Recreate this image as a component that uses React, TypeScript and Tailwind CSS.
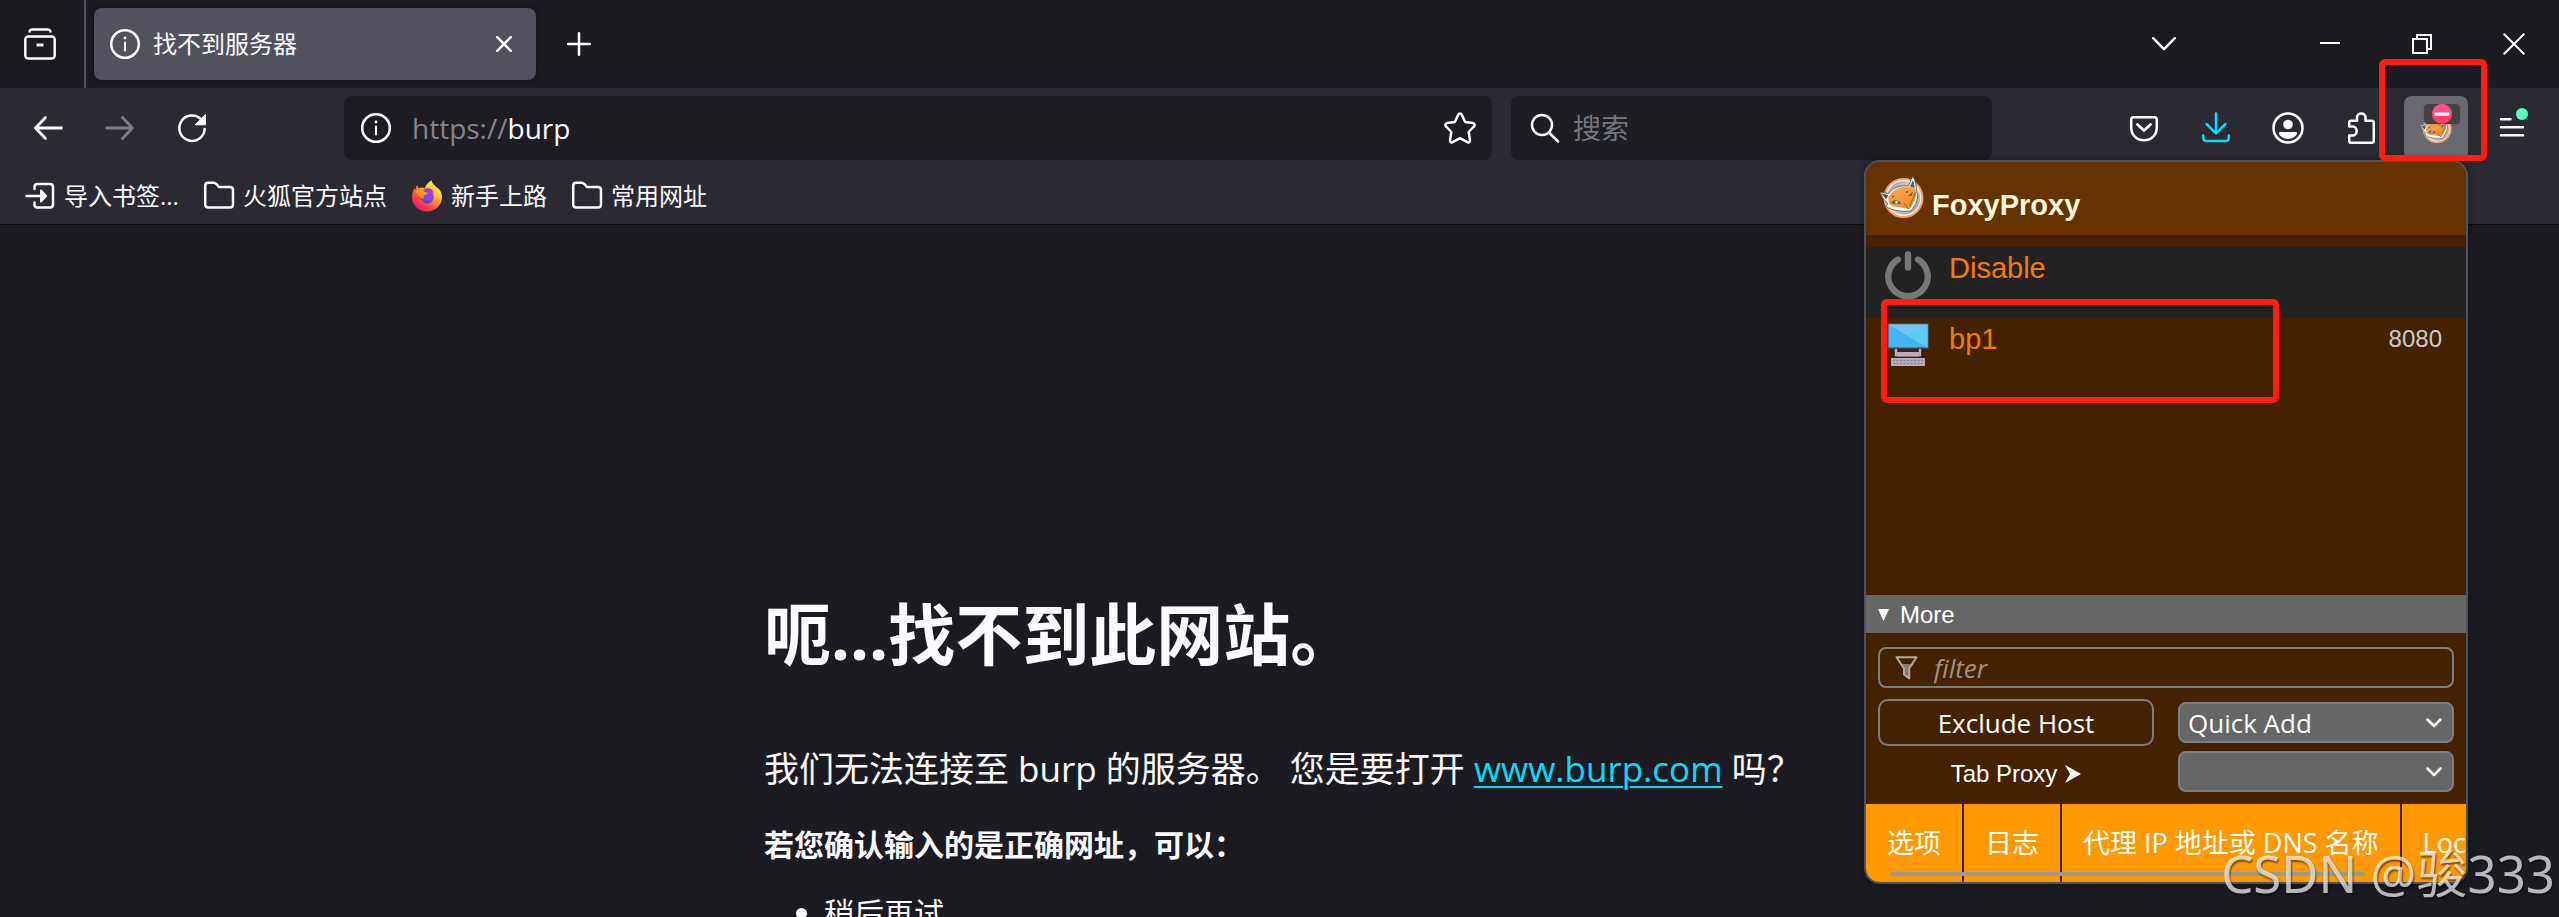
import React from "react";

type IconProps = { className?: string };

const stroke = {
  fill: "none",
  stroke: "currentColor",
  strokeWidth: 2.5,
  strokeLinecap: "round" as const,
  strokeLinejoin: "round" as const,
};

function RecentIcon() {
  return (
    <svg className="size-8" viewBox="0 0 32 32" {...stroke} aria-hidden="true">
      <path d="M5.500 3.500C6 2 6.800 1.500 8 1.500H24C25.200 1.500 26 2 26.500 3.500" />
      <rect x="1.300" y="8.500" width="29.400" height="22" rx="3" />
      <path d="M12.500 17H19.500" strokeWidth="3" strokeLinecap="butt" />
    </svg>
  );
}

function InfoIcon() {
  return (
    <svg className="size-8 shrink-0" viewBox="0 0 32 32" {...stroke} aria-hidden="true">
      <circle cx="16" cy="16" r="13.800" />
      <path d="M16 14.500V22.500" strokeWidth="2" />
      <circle cx="16" cy="10" r="1.400" fill="currentColor" stroke="none" />
    </svg>
  );
}

function ArrowIcon({ className = "" }: IconProps) {
  return (
    <svg className={`size-8 ${className}`} viewBox="0 0 32 32" {...stroke} strokeWidth="2.800" aria-hidden="true">
      <path d="M13.500 5.500L3.500 16L13.500 26.500M3.500 16H29.500" />
    </svg>
  );
}

function ReloadIcon() {
  return (
    <svg className="size-8" viewBox="0 0 32 32" {...stroke} aria-hidden="true">
      <path d="M28.700 17A12.700 12.700 0 1 1 25 7.200" />
      <path d="M29.500 2.800V12.800H19.500Z" fill="currentColor" strokeWidth="1" />
    </svg>
  );
}

function StarIcon() {
  return (
    <svg className="size-8 shrink-0" viewBox="0 0 32 32" {...stroke} aria-hidden="true">
      <path d="M14.300 2.600C14.900 1.200 17.100 1.200 17.700 2.600L21.200 10L28.700 11.100C30.600 11.400 31.200 13.200 29.900 14.500L24.700 20L26 28.200C26.200 30 24.800 30.900 23.300 30.200L16 26.200L8.700 30.200C7.200 30.900 5.800 30 6 28.200L7.300 20L2.100 14.500C.8 13.200 1.400 11.400 3.300 11.100L10.800 10Z" />
    </svg>
  );
}

function SearchIcon() {
  return (
    <svg className="size-8 shrink-0" viewBox="0 0 32 32" {...stroke} aria-hidden="true">
      <circle cx="13" cy="13" r="10" />
      <path d="M20 20.500L29 29.500" />
    </svg>
  );
}

function FolderIcon() {
  return (
    <svg className="size-8" viewBox="0 0 32 32" {...stroke} aria-hidden="true">
      <path d="M2.200 6C2.200 3.800 3.500 2.800 5 2.800H10.500C12 2.800 12.800 3.300 13.600 4.200L16 7H27C29 7 30 8.200 30 10V24.500C30 26.500 29 27.500 27 27.500H5.500C3.500 27.500 2.200 26.500 2.200 24.500Z" />
    </svg>
  );
}

function ImportIcon() {
  return (
    <svg className="size-8" viewBox="0 0 32 32" {...stroke} aria-hidden="true">
      <path d="M10.500 9V7C10.500 5 11.800 4 13.500 4H26C28 4 29 5 29 7V24.500C29 26.500 28 27.500 26 27.500H13.500C11.800 27.500 10.500 26.500 10.500 24.500V22.500" />
      <path d="M2.500 16H16" />
      <path d="M17 10.500L22 16L17 21.500Z" fill="currentColor" strokeWidth="2" />
    </svg>
  );
}

function FirefoxLogo() {
  return (
    <svg className="size-8" viewBox="0 0 32 32" aria-hidden="true">
      <defs>
        <linearGradient id="ffBody" x1="0.850" y1="0.100" x2="0.200" y2="0.950">
          <stop offset="0" stopColor="#fff44f" />
          <stop offset="0.300" stopColor="#ffc233" />
          <stop offset="0.550" stopColor="#ff7139" />
          <stop offset="0.800" stopColor="#ff3647" />
          <stop offset="1" stopColor="#e31587" />
        </linearGradient>
        <radialGradient id="ffCore" cx="0.600" cy="0.300" r="0.800">
          <stop offset="0" stopColor="#b833e1" />
          <stop offset="0.500" stopColor="#7a4be8" />
          <stop offset="1" stopColor="#4540c0" />
        </radialGradient>
      </defs>
      <path
        d="M20.500.3C20.800 3.200 23.200 4.800 25.500 7.300C29 9 31 13 31 17C31 25 24.500 31.500 16 31.500C7.500 31.500 1 25 1 17C1 13.500 2 10.500 3.600 8.200L4.300 10L6 5L7.800 8.200C9.500 7.200 12 7.400 13.600 8.200C15 5 17 2.500 20.500.3Z"
        fill="url(#ffBody)"
      />
      <circle cx="16.200" cy="16.800" r="6.600" fill="url(#ffCore)" />
      <path d="M12.500 9.200C16 7.200 22.500 8 22.800 14C21 11 17.500 10.500 15.500 12Z" fill="#a236d8" />
      <path d="M4.500 11C7 9 10.500 9.300 12.600 12C14 12.200 16 12 16.800 13C16.200 14.900 13 14.800 12.300 16.300C12.100 17.500 12.600 18.300 13.200 19C10 18.500 7 15.500 4.500 11Z" fill="#ff9a1e" />
    </svg>
  );
}

function PocketIcon() {
  return (
    <svg className="size-8" viewBox="0 0 32 32" {...stroke} aria-hidden="true">
      <path d="M5.500 5.300H26.500C28 5.300 28.800 6.200 28.800 7.700V15.500C28.800 23 23.500 28.200 16 28.200C8.500 28.200 3.200 23 3.200 15.500V7.700C3.200 6.200 4 5.300 5.500 5.300Z" />
      <path d="M9.500 12.500L16 18.500L22.500 12.500" strokeWidth="2.800" />
    </svg>
  );
}

function DownloadIcon() {
  return (
    <svg className="size-8" viewBox="0 0 32 32" {...stroke} aria-hidden="true">
      <path d="M16 1.500V21M6.500 12L16 21.300L25.500 12M3.200 23.500V26C3.200 28 4.500 29 6.500 29H25.500C27.500 29 28.800 28 28.800 26V23.500" />
    </svg>
  );
}

function AccountIcon() {
  return (
    <svg className="size-8" viewBox="0 0 32 32" aria-hidden="true">
      <circle cx="16" cy="16" r="14.500" fill="none" stroke="currentColor" strokeWidth="2.600" />
      <circle cx="16" cy="12.500" r="4.800" fill="currentColor" />
      <path d="M8.500 20H23.500C26 20 25 22.500 23.500 24C19.500 28 12.500 28 8.500 24C7 22.500 6 20 8.500 20Z" fill="currentColor" />
    </svg>
  );
}

function PuzzleIcon() {
  return (
    <svg className="size-8" viewBox="0 0 32 32" {...stroke} aria-hidden="true">
      <path d="M5.200 14.500V11C5.200 9.500 6 8.800 7.200 8.800H13V5.500C13 .2 21.500.2 21.500 5.500V8.800H27.500C29 8.800 29.800 9.500 29.800 11V28.500C29.800 30 29 30.800 27.500 30.800H7.200C6 30.800 5.200 30 5.200 28.500V23.500H8.500C14 23.500 14 14.500 8.500 14.500Z" />
    </svg>
  );
}

function FoxLogo({ className = "" }: IconProps) {
  return (
    <svg className={className} viewBox="0 0 44 42" aria-hidden="true">
      <defs>
        <linearGradient id="foxRing" x1="0" y1="0" x2="1" y2="1">
          <stop offset="0" stopColor="#8d9092" />
          <stop offset="0.500" stopColor="#d8d8d8" />
          <stop offset="1" stopColor="#85888a" />
        </linearGradient>
        <linearGradient id="foxFace" x1="0" y1="0" x2="1" y2="1">
          <stop offset="0" stopColor="#f9ab5e" />
          <stop offset="1" stopColor="#f58a1f" />
        </linearGradient>
      </defs>
      <circle cx="23.500" cy="22" r="19" fill="url(#foxRing)" stroke="#f3a15f" strokeWidth="2" />
      <circle cx="23.500" cy="22" r="17.300" fill="none" stroke="#f7f1ea" strokeWidth="1.200" />
      <path d="M.5 16.500L9 17.500C13 11.500 20 9 28.500 10L32.500.5C35.500 4 36.800 10 36.300 15.500C40 20 36 29 31 35C22 36 11 34.500 6.500 30.500L7.500 27C3.500 24 1.500 20 .5 16.500Z" fill="#fff" stroke="#666a6d" strokeWidth="1" strokeLinejoin="round" />
      <path d="M8 22C12 12 25 7.500 35 12.500C38 18 34.500 26 30 33C27 32 22 31.800 17 31C13 30.500 10 29.500 9 27.500Z" fill="url(#foxFace)" />
      <path d="M1.500 17.500L6 23.500L8.500 19ZM30 10.500L33 4L35 12Z" fill="#56595c" />
      <path d="M11 26.500C14 23 18 24 22 27.500C17 29 13 28.500 11 26.500ZM28 20L33 15.500L31.500 20Z" fill="#62625f" />
      <circle cx="16.500" cy="26.200" r="1.200" fill="#eee" />
      <path d="M35 17C34 23 31 25 30 30M24 27.500L28.500 33" fill="none" stroke="#8a5a25" strokeWidth="1" />
      <circle cx="13" cy="20.500" r="1" fill="#76552e" />
      <circle cx="27" cy="16" r="1" fill="#76552e" />
    </svg>
  );
}

function PowerIcon() {
  return (
    <svg className="h-12 w-[46px]" viewBox="0 0 46 48" fill="none" stroke="#777" strokeWidth="6.400" strokeLinecap="round" aria-hidden="true">
      <path d="M13 8.500A19.700 19.700 0 1 0 33 8.500" />
      <path d="M23 3.500V16.500" />
    </svg>
  );
}

function ComputerIcon() {
  return (
    <svg className="h-[43px] w-[42px]" viewBox="0 0 42 43" aria-hidden="true">
      <rect width="42" height="26" fill="#494056" />
      <rect x="1.500" y="1.500" width="39" height="23" fill="#44b5f2" />
      <path d="M1.500 1.500H40.500V24.500Z" fill="#74c4f6" />
      <path d="M20 12.500L40.500 1.500V24.500Z" fill="#5fcaf5" />
      <path d="M9 26V32H33V26" fill="none" stroke="#b5a9c0" strokeWidth="2.500" />
      <rect x="10" y="29" width="22" height="4.500" fill="#b9adc3" />
      <rect x="4" y="35" width="34" height="8" fill="#b3a9b8" />
      <path d="M6 37.500H36M6 40.500H36" stroke="#857b8d" strokeWidth="1" strokeDasharray="2 1.500" />
    </svg>
  );
}

function Chevron({ className = "" }: IconProps) {
  return (
    <svg className={className} viewBox="0 0 16 10" {...stroke} aria-hidden="true">
      <path d="M1.500 1.500L8 8L14.500 1.500" />
    </svg>
  );
}

const toolButton = "flex h-16 w-16 shrink-0 items-center justify-center rounded-lg";
const cjk = "font-['Open_Sans','Noto_Sans_CJK_SC',sans-serif]";

function TabStrip() {
  return (
    <header className="flex h-[88px] items-center">
      <button aria-label="最近浏览" className="ml-2 flex h-16 w-16 items-center justify-center">
        <RecentIcon />
      </button>
      <div className="ml-3 h-full w-[2px] bg-[#52525e]" />
      <div className="ml-2 flex h-[72px] w-[442px] items-center rounded-lg bg-[#52525e] pl-[15px] pr-4 shadow-[0_0_6px_rgba(0,0,0,0.5)]">
        <InfoIcon />
        <span className="ml-3 flex-1 text-[24px] leading-8">找不到服务器</span>
        <button aria-label="关闭标签页" className="flex h-8 w-8 items-center justify-center">
          <svg className="size-4" viewBox="0 0 16 16" {...stroke}>
            <path d="M1.200 1.200L14.800 14.800M14.800 1.200L1.200 14.800" />
          </svg>
        </button>
      </div>
      <button aria-label="新建标签页" className="ml-[11px] flex h-16 w-16 items-center justify-center">
        <svg className="size-6" viewBox="0 0 24 24" {...stroke}>
          <path d="M12 1.200V22.800M1.200 12H22.800" />
        </svg>
      </button>
      <div className="ml-auto flex items-center">
        <button aria-label="列出所有标签页" className="mr-[88px] flex h-16 w-16 items-center justify-center">
          <svg className="h-[14px] w-6" viewBox="0 0 24 14" {...stroke}>
            <path d="M1.200 1.200L12 12.200L22.800 1.200" />
          </svg>
        </button>
        <button aria-label="最小化" className="flex h-16 w-[92px] items-center justify-center">
          <svg className="size-5" viewBox="0 0 20 20">
            <path d="M0 9H20" stroke="currentColor" strokeWidth="2" />
          </svg>
        </button>
        <button aria-label="还原" className="flex h-16 w-[92px] items-center justify-center">
          <svg className="size-5" viewBox="0 0 20 20" fill="none" stroke="currentColor" strokeWidth="2">
            <path d="M1 5H15V19H1ZM5 5V1H19V15H15" />
          </svg>
        </button>
        <button aria-label="关闭" className="flex h-16 w-[91px] items-center justify-center">
          <svg className="size-[22px]" viewBox="0 0 22 22" fill="none" stroke="currentColor" strokeWidth="2">
            <path d="M.7.7L21.300 21.300M21.300.7L.7 21.300" />
          </svg>
        </button>
      </div>
    </header>
  );
}

function NavBar() {
  return (
    <div className="flex h-20 items-center pl-4 pr-[15px]">
      <div className="flex gap-2">
        <button aria-label="后退" className={toolButton}>
          <ArrowIcon />
        </button>
        <button aria-label="前进" disabled className={`${toolButton} text-[#7e7d84]`}>
          <ArrowIcon className="rotate-180" />
        </button>
        <button aria-label="重新载入" className={toolButton}>
          <ReloadIcon />
        </button>
      </div>
      <div className="ml-[120px] flex h-16 flex-1 items-center rounded-lg bg-[#1e1d24] px-4">
        <InfoIcon />
        <a href="https://burp" className="ml-5 flex-1 text-[28px] leading-9">
          <span className="text-[#85848a]">https://</span>burp
        </a>
        <button aria-label="为此页添加书签">
          <StarIcon />
        </button>
      </div>
      <label className="ml-[19px] flex h-16 w-[481px] items-center rounded-lg bg-[#1e1d24] pl-[18px]">
        <SearchIcon />
        <input
          aria-label="搜索"
          placeholder="搜索"
          className="ml-3 w-full bg-transparent text-[28px] leading-9 outline-none placeholder:text-[#76757b]"
        />
      </label>
      <div className="ml-[120px] flex gap-2">
        <button aria-label="保存到 Pocket" className={toolButton}>
          <PocketIcon />
        </button>
        <button aria-label="下载" className={`${toolButton} text-[#00ddff]`}>
          <DownloadIcon />
        </button>
        <button aria-label="账户" className={toolButton}>
          <AccountIcon />
        </button>
        <button aria-label="扩展" className={toolButton}>
          <PuzzleIcon />
        </button>
      </div>
      <div className="ml-3 flex gap-3">
        <button aria-label="FoxyProxy" className={`${toolButton} relative bg-[#6a6971]`}>
          <FoxLogo className="size-8" />
          <span className="absolute right-2 top-2 flex h-5 w-9 items-center justify-center rounded-sm bg-[#444] shadow">
            <svg className="size-5" viewBox="0 0 20 20" aria-hidden="true">
              <circle cx="10" cy="10" r="10" fill="#ff3b6f" />
              <path d="M0 10A10 10 0 0 1 20 10Z" fill="#ff4f86" />
              <rect x="2.500" y="8.500" width="15" height="3.200" rx="1" fill="#fff" />
            </svg>
          </span>
        </button>
        <button aria-label="打开应用程序菜单" className={toolButton}>
          <svg className="h-12 w-8" viewBox="0 0 32 48" aria-hidden="true">
            <path d="M5 15.200H14.500M5 23.200H27M5 31.200H27" {...stroke} />
            <circle cx="26" cy="10" r="6" fill="#54ffbd" />
          </svg>
        </button>
      </div>
    </div>
  );
}

const bookmarks = [
  { label: "导入书签...", icon: <ImportIcon /> },
  { label: "火狐官方站点", icon: <FolderIcon /> },
  { label: "新手上路", icon: <FirefoxLogo /> },
  { label: "常用网址", icon: <FolderIcon /> },
];

function BookmarksBar() {
  return (
    <nav className="flex h-14 items-center gap-6 pl-6">
      {bookmarks.map((b) => (
        <a key={b.label} href="#" className="flex items-center gap-2 whitespace-nowrap text-[24px] leading-8">
          {b.icon}
          {b.label}
        </a>
      ))}
    </nav>
  );
}

function ErrorPage() {
  return (
    <main className="pl-[764px] pt-[361px] text-[#fbfbfe]">
      <h1 className="font-['Noto_Sans','Noto_Sans_CJK_SC',sans-serif] text-[67px] font-bold leading-[96px]">呃…找不到此网站。</h1>
      <p className="mt-[63px] text-[35px] leading-[48px]">
        我们无法连接至 burp 的服务器。 您是要打开{" "}
        <a href="#" className="text-[#00ddff] underline decoration-2 underline-offset-4">
          www.burp.com
        </a>{" "}
        吗？
      </p>
      <p className="mt-8 text-[30px] font-bold leading-10">若您确认输入的是正确网址，可以：</p>
      <ul className="mt-7 list-disc pl-[60px] text-[30px] leading-10">
        <li>稍后再试</li>
      </ul>
    </main>
  );
}

const field = "h-[41px] w-full rounded-lg border-2 border-[#7d7d7d]";

function Dropdown({ id, label, options }: { id: string; label: string; options: string[] }) {
  return (
    <div className="relative">
      <select id={id} aria-label={label} className={`${field} appearance-none bg-[#666] pl-2 text-[26px] leading-8`}>
        {options.map((o) => (
          <option key={o}>{o}</option>
        ))}
      </select>
      <Chevron className="pointer-events-none absolute right-3 top-4 h-[10px] w-4" />
    </div>
  );
}

function FoxyPopup() {
  return (
    <section
      aria-label="FoxyProxy"
      className="absolute right-[91px] top-40 w-[604px] overflow-hidden rounded-2xl border-2 border-[#52525e] bg-[#442200] font-['Liberation_Sans',Arial,sans-serif] text-white shadow-[0_0_8px_rgba(0,0,0,0.4)]"
    >
      <h2 className="flex h-[73px] items-end gap-2 bg-[#663300] pb-[14px] pl-[14px] text-[29px] font-bold leading-8 text-[#fff8dc]">
        <FoxLogo className="mb-[3px] h-[42px] w-11" />
        FoxyProxy
      </h2>
      <div className="min-h-[360px] pt-3 text-[29px] leading-8 text-[#f57c00]">
        <button className="flex h-[71px] w-full items-start bg-[#222] pl-[19px] pt-1 text-left">
          <PowerIcon />
          <span className="ml-[18px] mt-[1px]">Disable</span>
        </button>
        <button className="flex h-[71px] w-full items-start pl-[21px] pr-6 pt-[5px] text-left">
          <ComputerIcon />
          <span className="ml-5">bp1</span>
          <span className="ml-auto text-[24px]">
            <span className="text-[#ccc]">8080</span>
          </span>
        </button>
      </div>
      <details open>
        <summary className="flex h-[38px] list-none items-center gap-[11px] bg-[#666] pl-3 pt-[2px] text-[24px]">
          <svg className="h-3 w-[11px]" viewBox="0 0 11 12" aria-hidden="true">
            <path d="M0 0H11L5.500 12Z" fill="currentColor" />
          </svg>
          More
        </summary>
        <div className="px-3 pb-3 pt-[14px]">
          <label className={`${field} flex items-center pl-[15px]`}>
            <svg className="h-6 w-[23px] shrink-0" viewBox="0 0 23 24" aria-hidden="true">
              <path d="M5 8H18L14 13V22L9 18V13Z" fill="#8b7a68" />
              <path d="M1.500 1.200H21.500L14.200 12.500V22.500L9 18.500V12.500Z" fill="none" stroke="#b3a99e" strokeWidth="2" strokeLinejoin="round" />
            </svg>
            <input
              aria-label="filter"
              placeholder="filter"
              className="ml-4 w-full bg-transparent font-['Open_Sans',sans-serif] text-[26px] italic leading-8 outline-none placeholder:text-[#a19080]"
            />
          </label>
          <div className="mt-[11px] grid grid-cols-2 items-center gap-x-6 gap-y-[5px] font-['Open_Sans',sans-serif]">
            <button className="h-[47px] rounded-[10px] border-2 border-[#7d7d7d] text-[26px] leading-8">Exclude Host</button>
            <Dropdown id="quick-add" label="Quick Add" options={["Quick Add"]} />
            <label htmlFor="tab-proxy" className="flex items-center justify-center gap-2 pt-1 font-['Liberation_Sans',Arial,sans-serif] text-[24px]">
              Tab Proxy
              <svg className="h-[18px] w-4" viewBox="0 0 16 18" aria-hidden="true">
                <path d="M0 0L16 9L0 18L5 9Z" fill="currentColor" />
              </svg>
            </label>
            <Dropdown id="tab-proxy" label="Tab Proxy" options={[""]} />
          </div>
        </div>
      </details>
      <nav className={`relative flex h-[78px] gap-[2px] overflow-hidden whitespace-nowrap text-[27px] leading-9 ${cjk}`}>
        {["选项", "日志", "代理 IP 地址或 DNS 名称", "Location"].map((t) => (
          <a key={t} href="#" className="flex shrink-0 items-center bg-[#ff9900] px-[21px]">
            {t}
          </a>
        ))}
        <span className="absolute bottom-[6px] left-6 h-1 w-[475px] rounded-full bg-[#999]" />
      </nav>
    </section>
  );
}

export default function App() {
  return (
    <div className={`relative h-screen overflow-hidden bg-[#1c1b22] text-[#fbfbfe] ${cjk}`}>
      <TabStrip />
      <div className="border-b border-[#0c0c0d] bg-[#2b2a33]">
        <NavBar />
        <BookmarksBar />
      </div>
      <ErrorPage />
      <FoxyPopup />
      <div className="pointer-events-none absolute right-[72px] top-[59px] h-[102px] w-[108px] rounded-md border-[6px] border-[#ff1e10]" />
      <div className="pointer-events-none absolute right-[280px] top-[299px] h-[104px] w-[398px] rounded-md border-[6px] border-[#ff1e10]" />
      <div className="pointer-events-none absolute bottom-0 right-1 whitespace-nowrap font-['Noto_Sans','Noto_Sans_CJK_SC',sans-serif] text-[51px] leading-[88px] text-white/70 [text-shadow:1px_2px_2px_rgba(0,0,0,0.5)]">
        CSDN @骏333
      </div>
    </div>
  );
}
